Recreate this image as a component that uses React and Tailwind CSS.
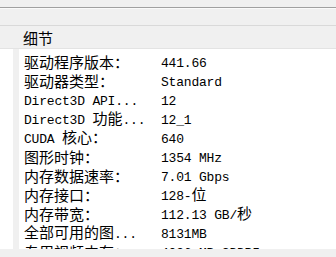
import React from "react";

const CJK = /([\u2e80-\u9fff\uff00-\uffef]+)/;

// mixed text: CJK runs in Noto, latin runs in a half-width mono
function T({ s }) {
  return (
    <>
      {s.split(CJK).map((p, i) =>
        !p ? null : CJK.test(p) ? (
          <span key={i} className="font-['Noto_Sans_CJK_SC',sans-serif] text-[15px]">
            {p}
          </span>
        ) : (
          <span
            key={i}
            className="font-['Liberation_Mono',monospace] text-[13px] tracking-[-0.2px] whitespace-pre"
          >
            {p}
          </span>
        )
      )}
    </>
  );
}

const rows = [
  ["驱动程序版本：", "441.66"],
  ["驱动器类型：", "Standard"],
  ["Direct3D API...", "12"],
  ["Direct3D 功能...", "12_1"],
  ["CUDA 核心：", "640"],
  ["图形时钟：", "1354 MHz"],
  ["内存数据速率：", "7.01 Gbps"],
  ["内存接口：", "128-位"],
  ["内存带宽：", "112.13 GB/秒"],
  ["全部可用的图...", "8131MB"],
  ["专用视频内存：", "4096 MB GDDR5"],
];

export default function App() {
  return (
    <div className="w-[336px] h-[257px] bg-[#f0f0f0] flex flex-col overflow-hidden text-black">
      <div className="h-[7px] shrink-0" />
      <div className="h-px shrink-0 bg-[#a0a0a0]" />
      <div className="h-px shrink-0 bg-[#fafafa]" />
      <div className="h-[16px] shrink-0" />
      <div className="h-px shrink-0 bg-[#d9d9d9]" />
      <div className="h-[22px] shrink-0 flex items-center pl-[23px]">
        <span className="font-['Noto_Sans_CJK_SC',sans-serif] text-[15px] leading-none">细节</span>
      </div>
      <div className="h-px shrink-0 bg-[#e3e3e3]" />

      <div className="flex-1 flex min-h-0">
        <div className="w-[13px] bg-white" />
        <div className="w-[6px] bg-[#f0f0f0]" />
        <div className="flex-1 bg-white pt-[3px] overflow-hidden">
          {rows.map(([label, value]) => (
            <div key={label} className="h-[19px] flex items-center">
              <div className="w-[142px] pl-[5px] shrink-0 whitespace-nowrap">
                <T s={label} />
              </div>
              <div className="whitespace-nowrap">
                <T s={value} />
              </div>
            </div>
          ))}
        </div>
      </div>

      <div className="h-[8px] shrink-0 bg-[#f0f0f0]" />
    </div>
  );
}
